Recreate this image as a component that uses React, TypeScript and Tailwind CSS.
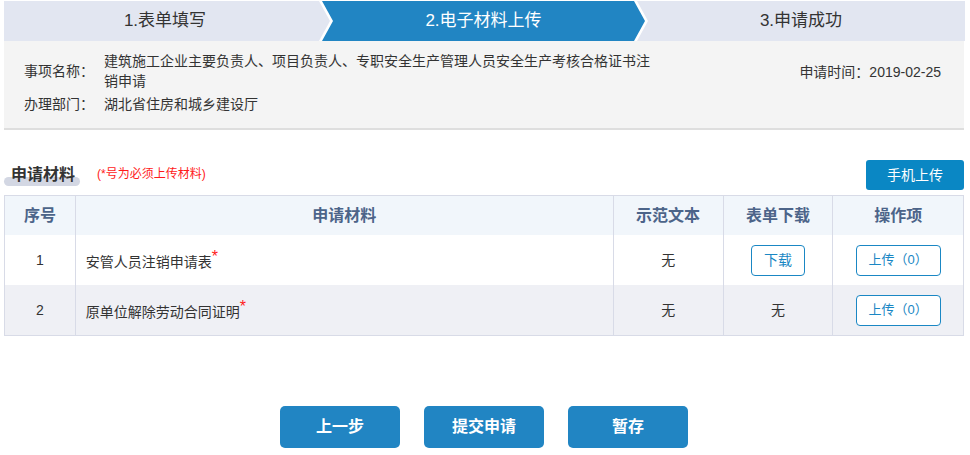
const rows = [
  { no: 1, name: "安管人员注销申请表", demo: "无", download: true },
  { no: 2, name: "原单位解除劳动合同证明", demo: "无", download: false },
];

const cols = ["w-[70px]", "w-[539px]", "w-[110px]", "w-[110px]", "w-[131px]"];

export default function App() {
  return (
    <div className="h-[455px] w-[970px] overflow-hidden bg-white font-['Liberation_Sans','Noto_Sans_CJK_SC',sans-serif] text-[#333]">
      {/* steps */}
      <div className="ml-[4px] mt-[1px] flex h-[40px]">
        <div className="flex w-[326px] items-center justify-center bg-[#e2e6f1] pr-[4px] text-[17px] text-[#333] [clip-path:polygon(0_0,calc(100%_-_11px)_0,100%_50%,calc(100%_-_11px)_100%,0_100%)]">
          1.表单填写
        </div>
        <div className="-ml-[8px] flex w-[323px] items-center justify-center bg-[#2185c3] text-[17px] text-white [clip-path:polygon(0_0,calc(100%_-_11px)_0,100%_50%,calc(100%_-_11px)_100%,0_100%,11px_50%)]">
          2.电子材料上传
        </div>
        <div className="-ml-[8px] flex w-[328px] items-center justify-center bg-[#e2e6f1] text-[17px] text-[#333] [clip-path:polygon(0_0,100%_0,100%_100%,0_100%,11px_50%)]">
          3.申请成功
        </div>
      </div>

      {/* info */}
      <div className="ml-[4px] flex h-[89px] w-[960px] justify-between border-b-2 border-[#dedede] bg-[#f4f4f4] pl-[20px] pr-[23px] pt-[10px] text-[14px] leading-[20px]">
        <div className="flex flex-col gap-[3px]">
          <div className="flex items-center">
            <span className="w-[80px]">事项名称：</span>
            <span className="w-[550px]">
              建筑施工企业主要负责人、项目负责人、专职安全生产管理人员安全生产考核合格证书注销申请
            </span>
          </div>
          <div className="flex items-center">
            <span className="w-[80px]">办理部门：</span>
            <span>湖北省住房和城乡建设厅</span>
          </div>
        </div>
        <div className="pt-[11px]">申请时间：2019-02-25</div>
      </div>

      {/* section heading */}
      <div className="ml-[4px] mt-[30px] flex w-[960px] items-end justify-between">
        <div className="flex items-center pb-[4px]">
          <div className="relative h-[24px] w-[76px]">
            <span className="absolute bottom-[0px] left-0 h-[9px] w-[76px] rounded-full bg-[#d3d7e3]" />
            <span className="relative block pl-[7px] pt-[1px] text-[16px] font-bold leading-[24px] text-[#333]">申请材料</span>
          </div>
          <span className="ml-[17px] text-[12px] text-[#ff1a1a]">(*号为必须上传材料)</span>
        </div>
        <button className="h-[30px] w-[98px] rounded-[3px] bg-[#0a87c4] text-[14px] text-white">手机上传</button>
      </div>

      {/* table */}
      <div className="ml-[4px] mt-[5px] w-[960px] border border-[#d8dbe7] text-[14px]">
        <div className="flex h-[39px] bg-[#f1f6fb] text-[16px] font-bold text-[#4c6489]">
          {["序号", "申请材料", "示范文本", "表单下载", "操作项"].map((h, i) => (
            <div key={h} className={`${cols[i]} flex items-center justify-center ${i > 0 ? "border-l border-[#d8dbe7]" : ""}`}>
              {h}
            </div>
          ))}
        </div>
        {rows.map((r, idx) => (
          <div key={r.no} className={`flex h-[50px] ${idx % 2 ? "bg-[#eff0f5]" : "bg-white"}`}>
            <div className={`${cols[0]} flex items-center justify-center`}>{r.no}</div>
            <div className={`${cols[1]} flex items-center border-l border-[#d8dbe7] pl-[10px] pt-[4px]`}>
              {r.name}
              <sup className="-top-[0.3em] text-[16px] text-[#ff1a1a]">*</sup>
            </div>
            <div className={`${cols[2]} flex items-center justify-center border-l border-[#d8dbe7]`}>{r.demo}</div>
            <div className={`${cols[3]} flex items-center justify-center border-l border-[#d8dbe7]`}>
              {r.download ? (
                <button className="h-[31px] w-[54px] rounded-[4px] border border-[#1a87c4] bg-white text-[14px] text-[#1a87c4]">下载</button>
              ) : (
                "无"
              )}
            </div>
            <div className={`${cols[4]} flex items-center justify-center border-l border-[#d8dbe7]`}>
              <button className="h-[31px] w-[85px] rounded-[4px] border border-[#1a87c4] bg-white text-[13px] text-[#1a87c4]">
                上传（0）
              </button>
            </div>
          </div>
        ))}
      </div>

      {/* actions */}
      <div className="mt-[70px] flex justify-center gap-[24px] pr-[2px]">
        {["上一步", "提交申请", "暂存"].map((t) => (
          <button key={t} className="h-[42px] w-[120px] rounded-[5px] bg-[#2185c3] text-[16px] font-bold text-white">
            {t}
          </button>
        ))}
      </div>
    </div>
  );
}
